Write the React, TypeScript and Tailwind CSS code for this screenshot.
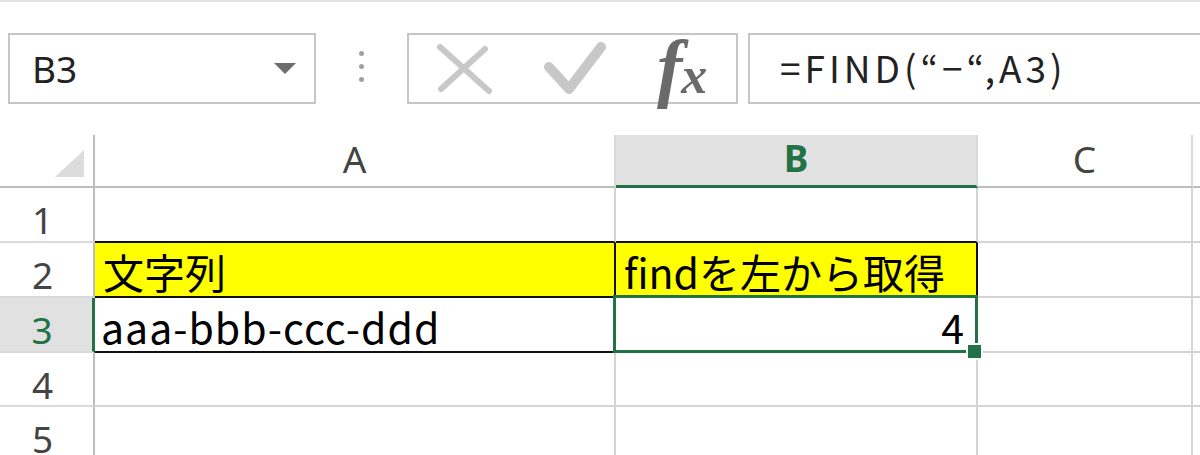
import React from "react";

const CJK = { fontFamily: '"Noto Sans CJK JP", "Noto Sans", sans-serif' };
const HDR = { fontFamily: '"Noto Sans", "Open Sans", sans-serif' };

function ColHeader({ w, label, selected, last }: { w: string; label: string; selected?: boolean; last?: boolean }) {
  return (
    <div
      className={`${w} shrink-0 h-full flex items-center justify-center text-[37px] pb-[4px] ${
        last ? "" : "border-r-2 border-[#dadada]"
      } ${
        selected
          ? "bg-[#e1e1e1] border-b-[3px] border-b-[#217346] text-[#217346] font-bold"
          : "border-b-2 border-b-[#bdbdbd] text-[#444444]"
      }`}
      style={HDR}
    >
      {label}
    </div>
  );
}

function RowHeader({ n, selected }: { n: number; selected?: boolean }) {
  return (
    <div
      className={`w-[95px] shrink-0 h-full flex items-center justify-center pr-[8px] pt-[10px] text-[37px] leading-none border-b-2 border-b-[#dadada] ${
        selected
          ? "bg-[#e1e1e1] border-r-[3px] border-r-[#217346] text-[#217346]"
          : "border-r-2 border-r-[#bdbdbd] text-[#444444]"
      }`}
      style={HDR}
    >
      {n}
    </div>
  );
}

export default function App() {
  return (
    <div className="w-[1200px] h-[455px] overflow-hidden bg-white border-t-2 border-[#e3e3e3] flex flex-col">
      {/* toolbar */}
      <div className="h-[133px] pt-[31px] flex items-start shrink-0">
        <div className="ml-[8px] shrink-0 w-[308px] h-[71px] border-2 border-[#c6c6c6] flex items-center justify-between pl-[22px] pr-[18px]">
          <span className="text-[37px] text-[#222222] leading-none" style={HDR}>
            B3
          </span>
          <svg width="22" height="12" viewBox="0 0 22 12">
            <polygon points="0,0 22,0 11,11" fill="#6d6d6d" />
          </svg>
        </div>
        <div className="w-[91px] shrink-0 h-[71px] flex flex-col items-center justify-center gap-[8px] pb-[4px]">
          <div className="w-[5px] h-[5px] rounded-full bg-[#a0a0a0]" />
          <div className="w-[5px] h-[5px] rounded-full bg-[#a0a0a0]" />
          <div className="w-[5px] h-[5px] rounded-full bg-[#a0a0a0]" />
        </div>
        <div className="w-[331px] shrink-0 h-[71px] border-2 border-[#c6c6c6] flex items-center">
          <svg className="ml-[26px] shrink-0" width="60" height="56" viewBox="0 0 60 56">
            <path d="M5 6 L54 50" stroke="#c8c8c8" strokeWidth="6" strokeLinecap="round" />
            <path d="M50 8 L6 48" stroke="#c8c8c8" strokeWidth="6" strokeLinecap="round" />
          </svg>
          <svg className="ml-[48px] shrink-0" width="64" height="56" viewBox="0 0 64 56">
            <path d="M6 26 L26 48 L58 6" stroke="#c8c8c8" strokeWidth="10" strokeLinecap="round" strokeLinejoin="round" fill="none" />
          </svg>
          <div
            className="ml-[50px] -mt-[4px] flex items-baseline text-[#6a6a6a] italic font-bold leading-none"
            style={{ fontFamily: '"Liberation Serif", "DejaVu Serif", serif' }}
          >
            <span className="text-[76px]">f</span>
            <span className="text-[52px] -ml-[1px]">x</span>
          </div>
        </div>
        <div className="ml-[10px] shrink-0 w-[480px] h-[71px] border-2 border-[#c6c6c6] flex items-center pl-[30px] pb-[2px]">
          <span className="text-[37px] text-[#222222] leading-none tracking-[4px] whitespace-nowrap" style={CJK}>
            =FIND(“−“,A3)
          </span>
        </div>
      </div>

      {/* sheet */}
      <div className="flex flex-col">
        {/* column headers */}
        <div className="h-[53px] flex">
          <div className="w-[95px] shrink-0 h-full border-r-2 border-r-[#bdbdbd] border-b-2 border-b-[#bdbdbd] relative">
            <svg className="absolute left-[55px] top-[15px]" width="30" height="28" viewBox="0 0 30 28">
              <polygon points="29,0 29,27 0,27" fill="#dcdcdc" />
            </svg>
          </div>
          <ColHeader w="w-[521px]" label="A" />
          <ColHeader w="w-[362px]" label="B" selected />
          <ColHeader w="w-[215px]" label="C" />
          <ColHeader w="flex-1" label="" last />
        </div>

        {/* row 1 */}
        <div className="h-[55px] flex">
          <RowHeader n={1} />
          <div className="w-[521px] shrink-0 h-full border-r-2 border-r-[#d4d4d4] border-b-2 border-b-[#111111]" />
          <div className="w-[362px] shrink-0 h-full border-r-2 border-r-[#d4d4d4] border-b-2 border-b-[#111111]" />
          <div className="w-[215px] shrink-0 h-full border-r-2 border-b-2 border-[#d4d4d4]" />
          <div className="flex-1 h-full border-b-2 border-[#d4d4d4]" />
        </div>

        {/* row 2 */}
        <div className="h-[55px] flex">
          <RowHeader n={2} />
          <div
            className="w-[521px] shrink-0 h-full bg-[#ffff00] border-r-2 border-b-2 border-[#111111] flex items-end pl-[8px] pb-[1px] text-[41px] leading-[48px] text-black"
            style={CJK}
          >
            文字列
          </div>
          <div
            className="w-[362px] shrink-0 h-full bg-[#ffff00] border-r-2 border-b-2 border-[#111111] flex items-end pl-[8px] pb-[1px] text-[41px] leading-[48px] text-black whitespace-nowrap"
            style={CJK}
          >
            findを左から取得
          </div>
          <div className="w-[215px] shrink-0 h-full border-r-2 border-b-2 border-[#d4d4d4]" />
          <div className="flex-1 h-full border-b-2 border-[#d4d4d4]" />
        </div>

        {/* row 3 */}
        <div className="h-[55px] flex">
          <RowHeader n={3} selected />
          <div
            className="w-[521px] shrink-0 h-full border-r-2 border-b-2 border-[#111111] flex items-end pl-[6px] pb-[1px] text-[41px] leading-[48px] tracking-[1px] text-black whitespace-nowrap"
            style={CJK}
          >
            aaa-bbb-ccc-ddd
          </div>
          <div
            className="w-[362px] shrink-0 h-full border-r-2 border-b-2 border-[#d4d4d4] relative flex items-end justify-end pr-[12px] pb-[1px] text-[41px] leading-[48px] text-black"
            style={CJK}
          >
            4
            <div className="absolute -left-[3px] -top-[3px] -right-[2px] -bottom-[2px] border-[3px] border-[#217346] pointer-events-none" />
            <div className="absolute left-[350px] top-[45px] w-[17px] h-[17px] bg-[#217346] border-2 border-white" />
          </div>
          <div className="w-[215px] shrink-0 h-full border-r-2 border-b-2 border-[#d4d4d4]" />
          <div className="flex-1 h-full border-b-2 border-[#d4d4d4]" />
        </div>

        {/* row 4 */}
        <div className="h-[54px] flex">
          <RowHeader n={4} />
          <div className="w-[521px] shrink-0 h-full border-r-2 border-b-2 border-[#d4d4d4]" />
          <div className="w-[362px] shrink-0 h-full border-r-2 border-b-2 border-[#d4d4d4]" />
          <div className="w-[215px] shrink-0 h-full border-r-2 border-b-2 border-[#d4d4d4]" />
          <div className="flex-1 h-full border-b-2 border-[#d4d4d4]" />
        </div>

        {/* row 5 */}
        <div className="h-[55px] flex">
          <RowHeader n={5} />
          <div className="w-[521px] shrink-0 h-full border-r-2 border-b-2 border-[#d4d4d4]" />
          <div className="w-[362px] shrink-0 h-full border-r-2 border-b-2 border-[#d4d4d4]" />
          <div className="w-[215px] shrink-0 h-full border-r-2 border-b-2 border-[#d4d4d4]" />
          <div className="flex-1 h-full border-b-2 border-[#d4d4d4]" />
        </div>
      </div>
    </div>
  );
}
